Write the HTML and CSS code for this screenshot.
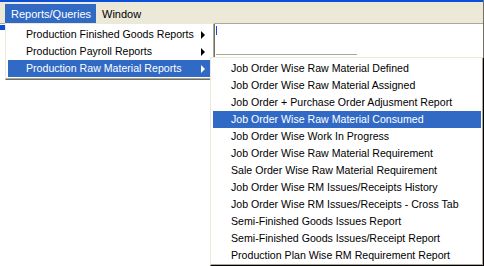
FILE: index.html
```html
<!DOCTYPE html>
<html lang="en">

<head>
    <meta charset="UTF-8">
    <title>Reports/Queries menu</title>
    <link rel="stylesheet" href="styles.css">
</head>

<body>
    <div class="app">
        <div class="caption-strip"></div>
        <nav class="menubar">
            <span class="menubar-item active">Reports/Queries</span>
            <span class="menubar-item">Window</span>
        </nav>
        <main class="client">
            <div class="child-bar"></div>
            <div class="child-form">
                <div class="caret"></div>
                <div class="field-line"></div>
            </div>
        </main>

        <!-- first level dropdown -->
        <ul class="menu main-menu">
            <li class="menu-item has-sub">Production Finished Goods Reports</li>
            <li class="menu-item has-sub">Production Payroll Reports</li>
            <li class="menu-item has-sub selected">Production Raw Material Reports</li>
        </ul>

        <!-- submenu -->
        <ul class="menu sub-menu">
            <li class="menu-item">Job Order Wise Raw Material Defined</li>
            <li class="menu-item">Job Order Wise Raw Material Assigned</li>
            <li class="menu-item">Job Order + Purchase Order Adjusment Report</li>
            <li class="menu-item selected">Job Order Wise Raw Material Consumed</li>
            <li class="menu-item">Job Order Wise Work In Progress</li>
            <li class="menu-item">Job Order Wise Raw Material Requirement</li>
            <li class="menu-item">Sale Order Wise Raw Material Requirement</li>
            <li class="menu-item">Job Order Wise RM Issues/Receipts History</li>
            <li class="menu-item">Job Order Wise RM Issues/Receipts - Cross Tab</li>
            <li class="menu-item">Semi-Finished Goods Issues Report</li>
            <li class="menu-item">Semi-Finished Goods Issues/Receipt Report</li>
            <li class="menu-item">Production Plan Wise RM Requirement Report</li>
        </ul>
    </div>
</body>

</html>
```

FILE: styles.css
```css
* {
    box-sizing: border-box;
    margin: 0;
    padding: 0;
}

body {
    width: 484px;
    height: 266px;
    overflow: hidden;
    background: #fff;
    font-family: 'Liberation Sans', Arial, sans-serif;
    font-size: 10.6px;
    color: #000;
}

.app {
    position: relative;
    display: flex;
    flex-direction: column;
    width: 484px;
    height: 266px;
    border-right: 1px solid #716f64;
}

.caption-strip {
    height: 2px;
    background: #0a50d8;
}

.menubar {
    display: flex;
    align-items: stretch;
    height: 21px;
    padding: 2px 0 0 5px;
    background: #ece9d8;
    font-size: 11px;
}

.menubar-item {
    display: flex;
    align-items: center;
    padding: 0 6px;
}

.menubar-item.active {
    width: 91px;
    background: #316ac5;
    color: #fff;
}

.client {
    flex: 1 1 0%;
    display: flex;
    border-top: 1px solid #aca899;
    box-shadow: inset 0 1px 0 #fff;
    background: #fff;
}

.child-bar {
    width: 5px;
    height: 5px;
    margin-top: 1px;
    background: #0a50d8;
}

.child-form {
    display: flex;
    flex-direction: column;
    margin-left: 211px;
    padding-top: 2px;
}

.caret {
    width: 1px;
    height: 9px;
    background: #0a50d8;
}

.field-line {
    width: 141px;
    height: 1px;
    margin-top: 19px;
    background: #aca899;
}

ul {
    list-style: none;
}

.menu {
    position: absolute;
    background: #fff;
    border-top: 1px solid #ece9d8;
    border-left: 1px solid #ece9d8;
    border-right: 1px solid #716f64;
    border-bottom: 1px solid #716f64;
    box-shadow: inset -1px -1px 0 #aca899, inset 1px 1px 0 #fff;
    padding: 2px;
}

.main-menu {
    left: 5px;
    top: 23px;
    width: 210px;
    height: 57px;
}

.sub-menu {
    left: 210px;
    top: 57px;
    width: 274px;
    height: 209px;
    border-right-color: #000;
    border-bottom-color: #000;
}

.menu-item {
    position: relative;
    height: 17px;
    line-height: 17px;
    padding-left: 18px;
    white-space: nowrap;
}

.menu-item.selected {
    background: #316ac5;
    color: #fff;
}

.has-sub::after {
    content: "";
    position: absolute;
    right: 7px;
    top: 5px;
    border-top: 4px solid transparent;
    border-bottom: 4px solid transparent;
    border-left: 4px solid #000;
}

.has-sub.selected::after {
    border-left-color: #fff;
}
```
